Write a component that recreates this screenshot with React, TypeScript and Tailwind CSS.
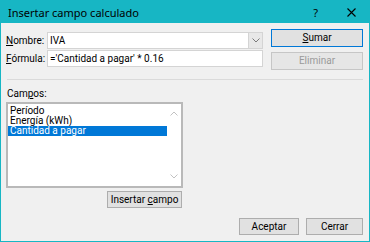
import React from "react";

const font = { fontFamily: 'Roboto, "Liberation Sans", sans-serif' };

function Chevron({ up = false, color = "#7a7a7a" }: { up?: boolean; color?: string }) {
  return (
    <svg width="8" height="5" viewBox="0 0 8 5" className="block">
      {up ? (
        <path d="M0.5 4.5 L4 1 L7.5 4.5" fill="none" stroke={color} strokeWidth="1" />
      ) : (
        <path d="M0.5 0.5 L4 4 L7.5 0.5" fill="none" stroke={color} strokeWidth="1" />
      )}
    </svg>
  );
}

export default function App() {
  return (
    <div
      className="w-[370px] h-[242px] border border-[#17b6c4] bg-[#f0f0f0] flex flex-col text-[10px] text-black leading-none"
      style={font}
    >
      {/* Title bar */}
      <div className="h-[22px] bg-[#17b6c4] flex items-center pl-[7px] shrink-0">
        <span className="text-[11px] text-black" style={{ fontFamily: '"Noto Sans", sans-serif' }}>
          Insertar campo calculado
        </span>
        <span className="ml-auto text-[11px] mr-[29px]" style={{ fontFamily: '"Noto Sans", sans-serif' }}>
          ?
        </span>
        <svg width="9" height="9" viewBox="0 0 9 9" className="mr-[13px]">
          <path d="M0.5 0.5 L8.5 8.5 M8.5 0.5 L0.5 8.5" stroke="#000" strokeWidth="1.1" />
        </svg>
      </div>

      {/* Body */}
      <div className="flex-1 flex flex-col px-[4px]">
        <div className="flex mt-[6px]">
          {/* Left: fields */}
          <div className="flex flex-col">
            <div className="flex items-center mt-[3px] h-[17px]">
              <span className="w-[42px] pl-[1px]">
                <span className="underline">N</span>ombre:
              </span>
              <div className="w-[216px] h-[17px] bg-white border border-[#d4d4d4] flex items-center">
                <span className="pl-[2px] flex-1">IVA</span>
                <div className="w-[14px] h-[15px] bg-[#e8e8e8] border-l border-[#d4d4d4] flex items-center justify-center">
                  <Chevron />
                </div>
              </div>
            </div>
            <div className="flex items-center mt-[1px] h-[17px]">
              <span className="w-[42px] pl-[1px]">
                <span className="underline">F</span>órmula:
              </span>
              <div className="w-[216px] h-[17px] bg-white border border-[#d4d4d4] flex items-center">
                <span className="pl-[2px]">='Cantidad a pagar' * 0.16</span>
              </div>
            </div>
          </div>
          {/* Right: buttons */}
          <div className="flex flex-col ml-[8px]">
            <div className="w-[92px] h-[18px] bg-[#e1e1e1] border border-[#0078d7] flex items-center justify-center">
              <span>
                <span className="underline">S</span>umar
              </span>
            </div>
            <div className="w-[92px] h-[18px] mt-[5px] bg-[#e6e6e6] border border-[#c6c6c6] flex items-center justify-center text-[#9a9a9a]">
              Eliminar
            </div>
          </div>
        </div>

        {/* Separator */}
        <div className="mt-[9px] mx-[2px] h-px bg-[#dadada]" />

        {/* Campos */}
        <div className="mt-[9px] pl-[2px]">
          Cam<span className="underline">p</span>os:
        </div>
        <div className="mt-[3px] ml-[1px] w-[177px] h-[86px] bg-white border-2 border-[#b9b9b9] flex">
          <div className="flex-1 flex flex-col pt-[2px]">
            <div className="h-[10px] leading-[10px] flex items-center pl-[2px]">Período</div>
            <div className="h-[10px] leading-[10px] flex items-center pl-[2px]">Energía (kWh)</div>
            <div className="h-[10px] leading-[10px] flex items-center pl-[2px] bg-[#0078d7] text-white">
              Cantidad a pagar
            </div>
          </div>
          <div className="w-[14px] flex flex-col items-center justify-between py-[7px]">
            <Chevron up color="#c2c2c2" />
            <Chevron color="#c2c2c2" />
          </div>
        </div>
        <div className="flex mt-[3px]">
          <div className="ml-[102px] w-[75px] h-[17px] bg-[#e1e1e1] border border-[#adadad] flex items-center justify-center">
            <span>
              Insertar <span className="underline">c</span>ampo
            </span>
          </div>
        </div>

        {/* Bottom buttons */}
        <div className="flex justify-end mt-[10px] mr-[2px]">
          <div className="w-[60px] h-[17px] bg-[#e1e1e1] border border-[#adadad] flex items-center justify-center">
            Aceptar
          </div>
          <div className="w-[57px] h-[17px] ml-[7px] bg-[#e1e1e1] border border-[#adadad] flex items-center justify-center">
            Cerrar
          </div>
        </div>
      </div>
    </div>
  );
}
